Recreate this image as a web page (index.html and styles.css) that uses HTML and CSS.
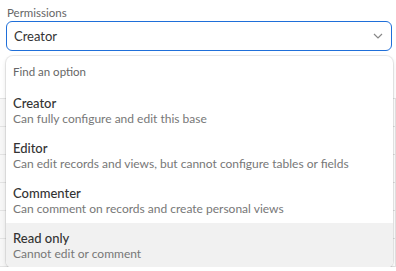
FILE: index.html
```html
<!DOCTYPE html>
<html lang="en">
<head>
  <meta charset="UTF-8">
  <title>Permissions</title>
  <link rel="stylesheet" href="styles.css">
</head>
<body>
  <div class="field">
    <div class="field-label">Permissions</div>
    <div class="select">
      <span class="select-value">Creator</span>
      <svg class="chevron" width="10" height="6" viewBox="0 0 10 6"><path d="M1 1l4 4 4-4" fill="none" stroke="#888" stroke-width="1.2"/></svg>
    </div>

    <div class="grid">
      <div class="grid-row"><div class="cell c1"></div><div class="cell c2"></div><div class="cell c3"></div></div>
      <div class="grid-row"><div class="cell c1"></div><div class="cell c2"></div><div class="cell c3"></div></div>
      <div class="grid-row"><div class="cell c1"></div><div class="cell c2"></div><div class="cell c3"></div></div>
      <div class="grid-row"><div class="cell c1"></div><div class="cell c2"></div><div class="cell c3"></div></div>
      <div class="grid-row"><div class="cell c1"></div><div class="cell c2"></div><div class="cell c3"></div></div>
      <div class="grid-row"><div class="cell c1"></div><div class="cell c2"><span class="pill"></span></div><div class="cell c3"></div></div>
    </div>

    <div class="menu">
      <div class="menu-search">Find an option</div>
      <div class="option">
        <div class="option-title">Creator</div>
        <div class="option-desc">Can fully configure and edit this base</div>
      </div>
      <div class="option">
        <div class="option-title">Editor</div>
        <div class="option-desc">Can edit records and views, but cannot configure tables or fields</div>
      </div>
      <div class="option">
        <div class="option-title">Commenter</div>
        <div class="option-desc">Can comment on records and create personal views</div>
      </div>
      <div class="option option-active">
        <div class="option-title">Read only</div>
        <div class="option-desc">Cannot edit or comment</div>
      </div>
    </div>
  </div>
</body>
</html>
```

FILE: styles.css
```css
body {
  margin: 0;
  padding: 0;
  font-family: 'Lato', sans-serif;
  background-color: white;
  color: #333;
  overflow: hidden;
}
.field {
  position: relative;
  padding: 4px 0 0 0;
}
.field-label {
  font-size: 11.5px;
  line-height: 17px;
  color: #666;
  padding-left: 7px;
}
.select {
  display: flex;
  align-items: center;
  justify-content: space-between;
  height: 28px;
  margin: 0 4px 0 6px;
  padding: 0 7px 0 7px;
  border: 1px solid #1f6fd9;
  border-radius: 6px;
  font-size: 13px;
  color: #333;
}
.chevron {
  margin-right: 1px;
}
.grid {
  margin-top: 47px;
  border-top: 1px solid #e3e3e3;
}
.grid-row {
  display: flex;
  height: 27px;
  border-bottom: 1px solid #e3e3e3;
}
.cell {
  border-right: 1px solid #e3e3e3;
}
.c1 {
  width: 80px;
  background-color: #f7f7f7;
}
.c2 {
  width: 237px;
  position: relative;
}
.c3 {
  flex: 1;
}
.pill {
  position: absolute;
  left: 8px;
  top: 20px;
  width: 37px;
  height: 14px;
  border-radius: 7px;
  background-color: #e9c9f2;
}
.menu {
  position: absolute;
  top: 56px;
  left: 6px;
  width: 387px;
  background-color: white;
  border-radius: 7px;
  box-shadow: 0 0 0 1px rgba(0, 0, 0, 0.07), 0 2px 5px rgba(0, 0, 0, 0.12);
  overflow: hidden;
}
.menu-search {
  height: 32px;
  line-height: 32px;
  padding-left: 7px;
  font-size: 11.5px;
  color: #666;
}
.option {
  padding: 7px 7px;
}
.option-active {
  background-color: #f1f1f1;
}
.option-title {
  font-size: 13px;
  line-height: 16px;
  color: #333;
  font-weight: 500;
}
.option-desc {
  font-size: 12px;
  line-height: 15px;
  color: #777;
}
```
